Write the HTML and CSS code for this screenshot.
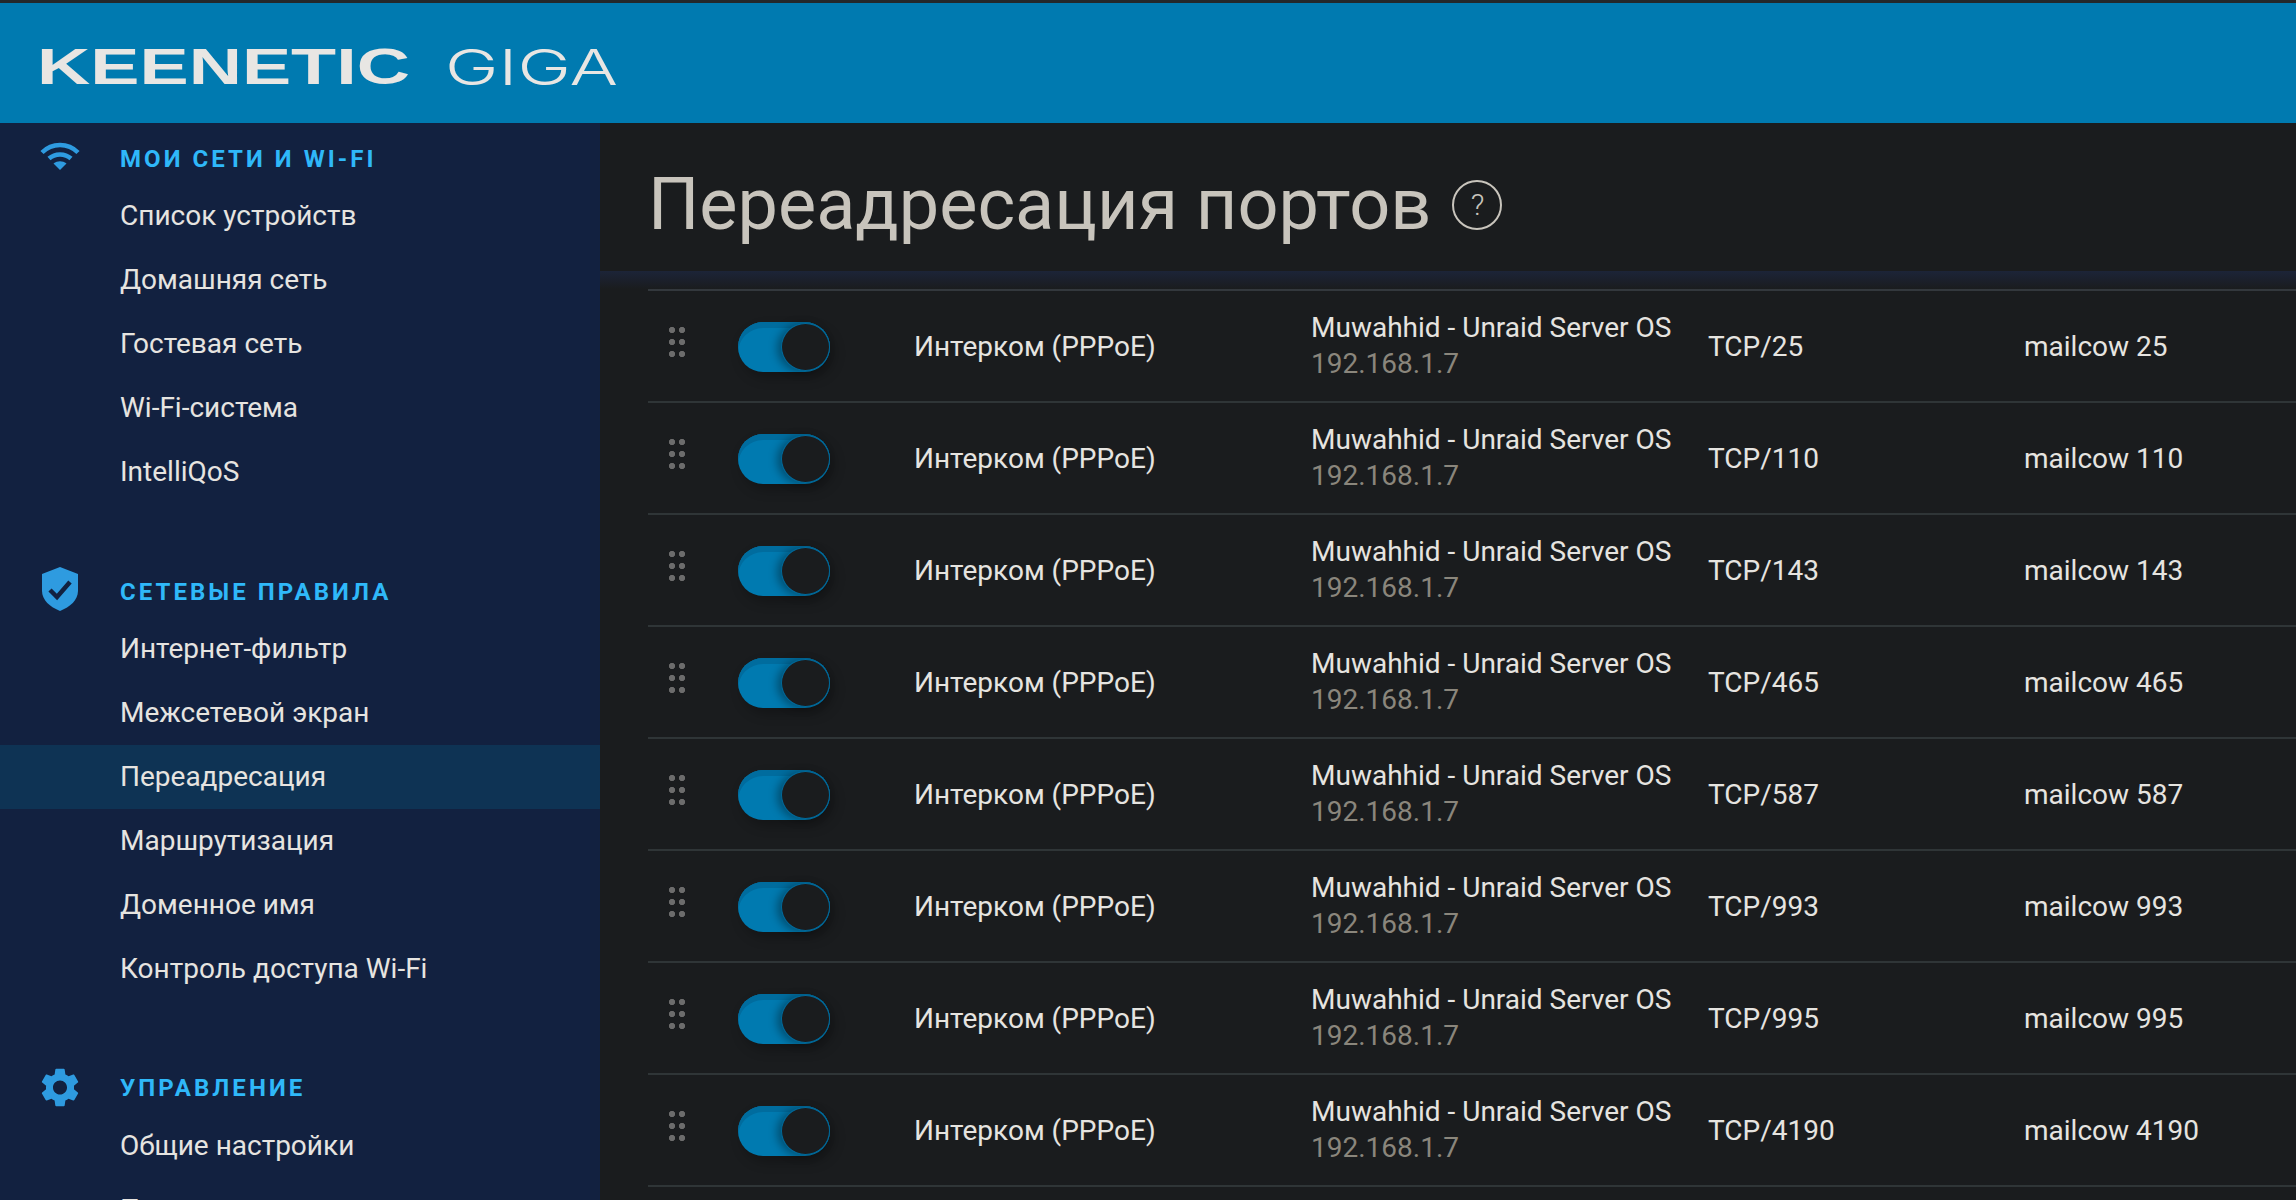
FILE: index.html

```html
<!DOCTYPE html>
<html lang="ru">
<head>
  <meta charset="UTF-8">
  <meta name="viewport" content="width=device-width, initial-scale=1.0">
  <title>Переадресация портов</title>
  <link rel="stylesheet" href="styles.css">
</head>
<body>
  <header class="topbar">
    <span class="logo-main">KEENETIC</span>
    <span class="logo-model">GIGA</span>
  </header>
  <div class="layout">
    <nav class="sidebar">
      <section class="nav-group">
        <h4 class="nav-title">
          <svg class="nav-icon" viewBox="0 0 40 28"><path class="wifi-arc" d="M2 10.500C12 .5 28 .5 38 10.500M9 16.500C15 11 25 11 31 16.500"/><path class="wifi-fill" d="M13.500 21.500C17.500 18.500 22.500 18.500 26.500 21.500L20 28Z"/></svg>
          МОИ СЕТИ И WI-FI
        </h4>
        <a class="nav-item">Список устройств</a>
        <a class="nav-item">Домашняя сеть</a>
        <a class="nav-item">Гостевая сеть</a>
        <a class="nav-item">Wi-Fi-система</a>
        <a class="nav-item">IntelliQoS</a>
      </section>
      <section class="nav-group">
        <h4 class="nav-title">
          <svg class="nav-icon" viewBox="0 0 36 44"><path class="wifi-fill" d="M18 0L36 7V24C36 33 28 40 18 44C8 40 0 33 0 24V7Z"/><path class="shield-check" d="M8 23L15 30L28 15"/></svg>
          СЕТЕВЫЕ ПРАВИЛА
        </h4>
        <a class="nav-item">Интернет-фильтр</a>
        <a class="nav-item">Межсетевой экран</a>
        <a class="nav-item active">Переадресация</a>
        <a class="nav-item">Маршрутизация</a>
        <a class="nav-item">Доменное имя</a>
        <a class="nav-item">Контроль доступа Wi-Fi</a>
      </section>
      <section class="nav-group">
        <h4 class="nav-title">
          <svg class="nav-icon" viewBox="2.500 2 19 20"><path class="wifi-fill" d="M19.140 12.940c.04-.3.06-.61.06-.94 0-.32-.02-.64-.07-.94l2.030-1.580c.18-.14.23-.41.12-.61l-1.920-3.320c-.12-.22-.37-.29-.59-.22l-2.390.96c-.5-.38-1.030-.7-1.620-.94l-.36-2.540c-.04-.24-.24-.41-.48-.41h-3.840c-.24 0-.43.17-.47.41l-.36 2.540c-.59.24-1.130.57-1.620.94l-2.390-.96c-.22-.08-.47 0-.59.22L2.740 8.870c-.12.21-.08.47.12.61l2.030 1.580c-.05.3-.09.63-.09.94s.02.64.07.94l-2.030 1.580c-.18.14-.23.41-.12.61l1.920 3.320c.12.22.37.29.59.22l2.390-.96c.5.38 1.030.7 1.620.94l.36 2.540c.05.24.24.41.48.41h3.840c.24 0 .44-.17.47-.41l.36-2.540c.59-.24 1.130-.56 1.620-.94l2.390.96c.22.08.47 0 .59-.22l1.920-3.320c.12-.22.07-.47-.12-.61l-2.010-1.580zM12 15.600c-1.980 0-3.600-1.620-3.600-3.600s1.620-3.600 3.600-3.600 3.600 1.620 3.600 3.600-1.620 3.600-3.600 3.600z"/></svg>
          УПРАВЛЕНИЕ
        </h4>
        <a class="nav-item">Общие настройки</a>
        <a class="nav-item">Приложения</a>
      </section>
    </nav>
    <main class="content">
      <div class="page-head">
        <h1 class="page-title">Переадресация портов</h1>
        <span class="help">?</span>
      </div>
      <div class="head-shadow"></div>
      <div class="rules">
        <div class="rule">
          <span class="drag"></span>
          <span class="toggle"><span class="knob"></span></span>
          <span>Интерком (PPPoE)</span>
          <span class="device">Muwahhid - Unraid Server OS<small class="ip">192.168.1.7</small></span>
          <span>TCP/25</span>
          <span>mailcow 25</span>
        </div>
        <div class="rule">
          <span class="drag"></span>
          <span class="toggle"><span class="knob"></span></span>
          <span>Интерком (PPPoE)</span>
          <span class="device">Muwahhid - Unraid Server OS<small class="ip">192.168.1.7</small></span>
          <span>TCP/110</span>
          <span>mailcow 110</span>
        </div>
        <div class="rule">
          <span class="drag"></span>
          <span class="toggle"><span class="knob"></span></span>
          <span>Интерком (PPPoE)</span>
          <span class="device">Muwahhid - Unraid Server OS<small class="ip">192.168.1.7</small></span>
          <span>TCP/143</span>
          <span>mailcow 143</span>
        </div>
        <div class="rule">
          <span class="drag"></span>
          <span class="toggle"><span class="knob"></span></span>
          <span>Интерком (PPPoE)</span>
          <span class="device">Muwahhid - Unraid Server OS<small class="ip">192.168.1.7</small></span>
          <span>TCP/465</span>
          <span>mailcow 465</span>
        </div>
        <div class="rule">
          <span class="drag"></span>
          <span class="toggle"><span class="knob"></span></span>
          <span>Интерком (PPPoE)</span>
          <span class="device">Muwahhid - Unraid Server OS<small class="ip">192.168.1.7</small></span>
          <span>TCP/587</span>
          <span>mailcow 587</span>
        </div>
        <div class="rule">
          <span class="drag"></span>
          <span class="toggle"><span class="knob"></span></span>
          <span>Интерком (PPPoE)</span>
          <span class="device">Muwahhid - Unraid Server OS<small class="ip">192.168.1.7</small></span>
          <span>TCP/993</span>
          <span>mailcow 993</span>
        </div>
        <div class="rule">
          <span class="drag"></span>
          <span class="toggle"><span class="knob"></span></span>
          <span>Интерком (PPPoE)</span>
          <span class="device">Muwahhid - Unraid Server OS<small class="ip">192.168.1.7</small></span>
          <span>TCP/995</span>
          <span>mailcow 995</span>
        </div>
        <div class="rule">
          <span class="drag"></span>
          <span class="toggle"><span class="knob"></span></span>
          <span>Интерком (PPPoE)</span>
          <span class="device">Muwahhid - Unraid Server OS<small class="ip">192.168.1.7</small></span>
          <span>TCP/4190</span>
          <span>mailcow 4190</span>
        </div>
      </div>
    </main>
  </div>
</body>
</html>
```

FILE: styles.css

```css
html, body {
  height: 100%;
}
body {
  margin: 0;
  overflow: hidden;
  display: flex;
  flex-direction: column;
  font-family: Roboto, sans-serif;
  font-size: 28px;
  background-color: #1a1c1e;
  color: #e6e4e0;
}
.topbar {
  flex: none;
  box-sizing: border-box;
  height: 123px;
  border-top: 3px solid #23282b;
  padding: 8px 0 0 37px;
  display: flex;
  align-items: center;
  background-color: #007ab0;
  color: #e8e6e3;
}
.logo-main {
  display: inline-block;
  width: 368px;
  font-family: "Liberation Sans", sans-serif;
  font-size: 50px;
  font-weight: bold;
  line-height: 1;
  white-space: nowrap;
  transform: scaleX(1.475);
  transform-origin: left center;
}
.logo-model {
  display: inline-block;
  margin-left: 40px;
  font-family: Inter, sans-serif;
  font-size: 49px;
  font-weight: 300;
  line-height: 1;
  transform: scaleX(1.47);
  transform-origin: left center;
}
.layout {
  flex: 1;
  display: flex;
  min-height: 0;
}
.sidebar {
  flex: none;
  width: 600px;
  background-color: #122140;
}
.nav-group {
  margin-bottom: 54px;
}
.nav-group:first-child {
  margin-bottom: 53px;
}
.nav-title {
  position: relative;
  height: 60px;
  margin: 0;
  padding: 9px 0 0 120px;
  box-sizing: border-box;
  display: flex;
  align-items: center;
  font-size: 24px;
  font-weight: 700;
  letter-spacing: 3.050px;
  color: #2fb8f9;
}
.nav-group:nth-child(1) .nav-title {
  height: 61px;
  padding-top: 10px;
}
.nav-group:nth-child(3) .nav-title {
  height: 59px;
  padding-top: 6px;
}
.nav-icon {
  position: absolute;
  left: 40px;
  top: 19px;
  width: 40px;
  height: 28px;
}
.nav-group:nth-child(2) .nav-icon {
  left: 42px;
  top: 10px;
  width: 36px;
  height: 44px;
}
.nav-group:nth-child(3) .nav-icon {
  left: 41px;
  top: 13px;
  width: 38px;
  height: 39px;
}
.wifi-arc {
  fill: none;
  stroke: #2e9be0;
  stroke-width: 4.500;
}
.wifi-fill {
  fill: #2e9be0;
}
.shield-check {
  fill: none;
  stroke: #122140;
  stroke-width: 4.500;
}
.nav-item {
  display: block;
  height: 64px;
  line-height: 64px;
  padding-left: 120px;
  color: #e6e4e0;
}
.nav-item.active {
  background-color: #0e3354;
}
.content {
  flex: 1;
  min-width: 0;
}
.page-head {
  height: 148px;
  padding-left: 48px;
  box-sizing: border-box;
  display: flex;
  align-items: center;
  gap: 21px;
}
.page-title {
  margin: 14px 0 0;
  font-size: 72px;
  font-weight: 400;
  color: #c8c4bc;
}
.help {
  width: 46px;
  height: 46px;
  margin-top: 15px;
  border: 2px solid #c8c4bc;
  border-radius: 50%;
  display: flex;
  align-items: center;
  justify-content: center;
  font-size: 30px;
  font-weight: 300;
  color: #c8c4bc;
}
.head-shadow {
  height: 18px;
  background: linear-gradient(#1c2438, #1a1c1e);
}
.rules {
  margin-left: 48px;
  border-top: 2px solid #33383d;
}
.rule {
  height: 110px;
  border-bottom: 2px solid #2f3537;
  display: grid;
  grid-template-columns: 90px 176px 397px 397px 316px 1fr;
  align-items: center;
}
.drag {
  align-self: start;
  width: 20px;
  height: 36px;
  margin: 33px 0 0 19px;
  background-image: radial-gradient(circle, #6c6c6c 2.800px, transparent 3.400px);
  background-size: 10px 12px;
}
.toggle {
  align-self: start;
  box-sizing: border-box;
  width: 92px;
  height: 50px;
  margin-top: 31px;
  border-radius: 25px;
  display: flex;
  justify-content: flex-end;
  background-color: #007ab0;
  box-shadow: inset 0 6px 0 #006c9e, 4px 6px 12px rgba(0, 0, 0, 0.25);
}
.knob {
  box-sizing: border-box;
  width: 49px;
  height: 48px;
  margin: 1px 0;
  border: 1.500px solid #00699a;
  border-radius: 50%;
  background-color: #1a1c1e;
  box-shadow: -4px 1px 8px rgba(0, 0, 0, 0.35);
}
.device {
  line-height: 36px;
}
.ip {
  display: block;
  font-size: 28px;
  color: #8a867c;
}
```
